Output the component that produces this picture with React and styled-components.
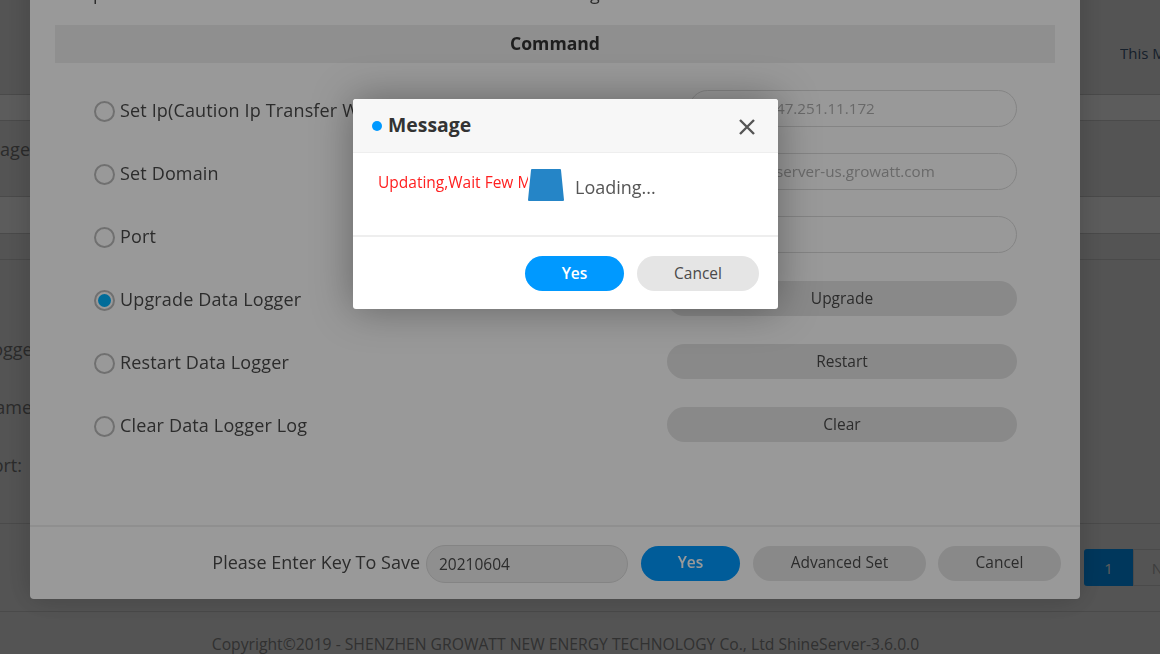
import React from 'react'
import styled, { createGlobalStyle } from 'styled-components'

const GlobalStyle = createGlobalStyle`
  html, body {
    margin: 0;
    height: 654px;
    overflow: hidden;
    background: #fff;
    font-family: "Open Sans", "Noto Sans", "Liberation Sans", sans-serif;
  }
`

/* page behind the dialogs */
const Page = styled.div`
  height: 654px;
  display: flex;
  flex-direction: column;
  background: #e8e8e8;
  color: #777;
  overflow: hidden;
  font-size: 18px;
`

const TopBar = styled.div`
  height: 95px;
  flex: none;
  display: flex;
  justify-content: flex-end;
  align-items: flex-start;
  padding: 43px 0 0;
  box-sizing: border-box;
  border-bottom: 1px solid #ccc;
`

const TopLabel = styled.span`
  width: 40px;
  font-size: 15px;
  line-height: 20px;
  white-space: nowrap;
  overflow: hidden;
  color: #3f5a78;
`

const TableRow = styled.div`
  height: ${(p) => p.$h}px;
  flex: none;
  box-sizing: border-box;
  padding-top: ${(p) => p.$pt || 0}px;
  border-bottom: 1px solid #ccc;
  background: ${(p) => (p.$light ? '#fff' : 'transparent')};
`

const FormArea = styled.div`
  height: 264px;
  flex: none;
  box-sizing: border-box;
  border-bottom: 1px solid #ccc;
  display: flex;
  flex-direction: column;
  padding-top: 78px;
  gap: 36px;
`

const SideText = styled.span`
  display: flex;
  justify-content: flex-end;
  width: ${(p) => p.$w}px;
  line-height: 22px;
  white-space: nowrap;
  overflow: hidden;
`

const BottomRow = styled.div`
  height: 88px;
  flex: none;
  box-sizing: border-box;
  border-bottom: 1px solid #ccc;
  display: flex;
  padding: 25px 0 0 1084px;
`

const PageBtn = styled.div`
  width: 49px;
  height: 37px;
  flex: none;
  box-sizing: border-box;
  display: flex;
  align-items: center;
  justify-content: center;
  font-size: 15px;
  border: ${(p) => (p.$active ? '0' : '1px solid #ccc')};
  border-radius: ${(p) => (p.$active ? '3px 0 0 3px' : '0')};
  background: ${(p) => (p.$active ? '#0099ff' : '#e8e8e8')};
  color: ${(p) => (p.$active ? '#fff' : '#aaa')};
`

const PageFooter = styled.div`
  flex: 1;
  text-align: center;
  font-size: 15.7px;
  color: #888;
  padding: 22px 29px 0 0;
  line-height: 20px;
  white-space: nowrap;
`

/* overlays */
const Mask = styled.div`
  position: fixed;
  inset: 0;
  background: rgba(0, 0, 0, 0.4);
`

const BigDialog = styled.div`
  position: fixed;
  left: 30px;
  top: -40px;
  width: 1050px;
  height: 639px;
  box-sizing: border-box;
  background: #fff;
  border-radius: 4px;
  box-shadow: 0 0 30px rgba(0, 0, 0, 0.2);
  display: flex;
  flex-direction: column;
  padding: 21px 25px 0;
  color: #4a4a4a;
`

const InfoRow = styled.div`
  height: 24px;
  flex: none;
  display: flex;
  gap: 400px;
  margin-bottom: 20px;
  padding-left: 25px;
  font-size: 18px;
  line-height: 24px;
`

const CommandTitle = styled.div`
  height: 38px;
  flex: none;
  background: #eee;
  display: flex;
  align-items: center;
  justify-content: center;
  padding-bottom: 2px;
  box-sizing: border-box;
  font-size: 17.6px;
  font-weight: 700;
  color: #333;
`

const CommandList = styled.div`
  flex: 1;
  display: flex;
  flex-direction: column;
  gap: 26px;
  padding: 27px 38px 0 39px;
`

const CommandRow = styled.div`
  height: 37px;
  display: flex;
  align-items: center;
  justify-content: space-between;
`

const RadioLabel = styled.label`
  display: flex;
  align-items: center;
  gap: 5px;
  margin-top: 3px;
  font-size: 18px;
  letter-spacing: 0.15px;
  white-space: nowrap;
`

const Radio = styled.span`
  width: 21px;
  height: 21px;
  flex: none;
  box-sizing: border-box;
  margin-top: 3px;
  border: 2px solid #bbb;
  border-radius: 50%;
  display: flex;
  align-items: center;
  justify-content: center;
  background: #fff;

  &::after {
    content: '';
    display: ${(p) => (p.$checked ? 'block' : 'none')};
    width: 13px;
    height: 13px;
    border-radius: 50%;
    background: #00b4ff;
  }
`

const PillInput = styled.div`
  width: 328px;
  height: 37px;
  box-sizing: border-box;
  border: 1px solid #ddd;
  border-radius: 19px;
  padding: 0 0 2px 86px;
  display: flex;
  align-items: center;
  font-size: 15.2px;
  color: #b0b0b0;
  white-space: nowrap;
`

const CommandBtn = styled.button`
  width: 350px;
  height: 35px;
  border: 0;
  border-radius: 18px;
  margin-top: 2px;
  padding: 0 0 2px;
  background: #e5e5e5;
  color: #4a4a4a;
  font: inherit;
  font-size: 15.5px;
`

const DialogFooter = styled.div`
  margin: 0 -25px;
  height: 74px;
  flex: none;
  box-sizing: border-box;
  border-top: 2px solid #eee;
  display: flex;
  align-items: center;
  justify-content: flex-end;
  padding: 0 19px 0 0;
`

const KeyLabel = styled.span`
  font-size: 18px;
  margin: 0 6px 2px 0;
  white-space: nowrap;
`

const KeyInput = styled.div`
  width: 202px;
  height: 38px;
  box-sizing: border-box;
  border: 1px solid #ddd;
  border-radius: 19px;
  background: #eee;
  padding-left: 12px;
  margin-top: 2px;
  display: flex;
  align-items: center;
  font-size: 15.5px;
  margin-right: 13px;
`

const PillBtn = styled.button`
  width: ${(p) => p.$w}px;
  height: 35px;
  border: 0;
  border-radius: 18px;
  margin-left: ${(p) => p.$ml || 0}px;
  padding: 0 0 2px;
  background: ${(p) => (p.$primary ? '#0099ff' : '#e5e5e5')};
  color: ${(p) => (p.$primary ? '#fff' : '#4a4a4a')};
  font: inherit;
  font-size: 15.5px;
  font-weight: ${(p) => (p.$bold ? 600 : 400)};
`

/* message box on top */
const MessageBox = styled.div`
  position: fixed;
  left: 353px;
  top: 99px;
  width: 425px;
  height: 210px;
  background: #fff;
  border-radius: 3px;
  box-shadow: 0 0 40px rgba(0, 0, 0, 0.35);
  display: flex;
  flex-direction: column;
  overflow: hidden;
`

const MessageHeader = styled.div`
  height: 54px;
  flex: none;
  box-sizing: border-box;
  background: #f7f7f7;
  border-bottom: 1px solid #eee;
  display: flex;
  align-items: center;
  padding: 0 22px 0 19px;
`

const Dot = styled.span`
  width: 10px;
  height: 10px;
  border-radius: 50%;
  background: #0099ff;
  margin-right: 6px;
`

const MessageTitle = styled.span`
  flex: 1;
  font-size: 19.4px;
  font-weight: 700;
  color: #333;
  margin-bottom: 2px;
`

const CloseIcon = styled.svg`
  width: 18px;
  height: 18px;
  margin-top: 2px;
`

const MessageBody = styled.div`
  position: relative;
  height: 84px;
  flex: none;
  box-sizing: border-box;
  padding: 19px 0 0 25px;
  color: #ff2020;
  font-size: 15.5px;
  line-height: 20px;
  white-space: nowrap;
  overflow: hidden;
  border-bottom: 2px solid #eee;
`

const LoaderLayer = styled.div`
  position: absolute;
  left: 175px;
  top: 0;
  right: 0;
  bottom: 0;
  background: #fff;
  display: flex;
  align-items: flex-start;
  padding-top: 15px;
  gap: 11px;
  color: #555;
  font-size: 18px;
`

const LoaderShape = styled.svg`
  width: 36px;
  height: 34px;
  flex: none;
`

const LoadingText = styled.span`
  line-height: 38px;
`

const MessageFooter = styled.div`
  flex: 1;
  display: flex;
  justify-content: flex-end;
  gap: 13px;
  padding: 19px 19px 0 0;
`

const commands = [
  { label: 'Set Ip(Caution Ip Transfer Will Lost Data)', value: '47.251.11.172' },
  { label: 'Set Domain', value: 'server-us.growatt.com' },
  { label: 'Port', value: '' },
  { label: 'Upgrade Data Logger', action: 'Upgrade', checked: true },
  { label: 'Restart Data Logger', action: 'Restart' },
  { label: 'Clear Data Logger Log', action: 'Clear' },
]

export default function App() {
  return (
    <>
      <GlobalStyle />
      <Page>
        <TopBar>
          <TopLabel>This Month</TopLabel>
        </TopBar>
        <TableRow $h={26} $light />
        <TableRow $h={76} $pt={17}>
          <SideText $w={30}>Page</SideText>
        </TableRow>
        <TableRow $h={37} $light />
        <TableRow $h={26} />
        <FormArea>
          <SideText $w={40}>Data Logger</SideText>
          <SideText $w={32}>Name</SideText>
          <SideText $w={22}>Port:</SideText>
        </FormArea>
        <BottomRow>
          <PageBtn $active>1</PageBtn>
          <PageBtn>N</PageBtn>
        </BottomRow>
        <PageFooter>Copyright©2019 - SHENZHEN GROWATT NEW ENERGY TECHNOLOGY Co., Ltd ShineServer-3.6.0.0</PageFooter>
      </Page>

      <Mask />
      <BigDialog>
        <InfoRow>
          <span>Update</span>
          <span>Setting</span>
        </InfoRow>
        <CommandTitle>Command</CommandTitle>
        <CommandList>
          {commands.map((c) => (
            <CommandRow key={c.label}>
              <RadioLabel>
                <Radio $checked={c.checked} />
                {c.label}
              </RadioLabel>
              {c.action ? <CommandBtn>{c.action}</CommandBtn> : <PillInput>{c.value}</PillInput>}
            </CommandRow>
          ))}
        </CommandList>
        <DialogFooter>
          <KeyLabel>Please Enter Key To Save</KeyLabel>
          <KeyInput>20210604</KeyInput>
          <PillBtn $w={99} $primary $bold>Yes</PillBtn>
          <PillBtn $w={173} $ml={13}>Advanced Set</PillBtn>
          <PillBtn $w={123} $ml={12}>Cancel</PillBtn>
        </DialogFooter>
      </BigDialog>

      <Mask />
      <MessageBox>
        <MessageHeader>
          <Dot />
          <MessageTitle>Message</MessageTitle>
          <CloseIcon viewBox="0 0 18 18" fill="none" stroke="#555" strokeWidth="2.4">
            <path d="M2 2l14 14M16 2L2 16" />
          </CloseIcon>
        </MessageHeader>
        <MessageBody>
          Updating,Wait Few Minutes
          <LoaderLayer>
            <LoaderShape viewBox="0 0 36 34">
              <path d="M4 1h28a1 1 0 0 1 1 1l3 30a1 1 0 0 1-1 1H1a1 1 0 0 1-1-1L3 2a1 1 0 0 1 1-1z" fill="#2585c7" />
            </LoaderShape>
            <LoadingText>Loading...</LoadingText>
          </LoaderLayer>
        </MessageBody>
        <MessageFooter>
          <PillBtn $w={99} $primary $bold>Yes</PillBtn>
          <PillBtn $w={122}>Cancel</PillBtn>
        </MessageFooter>
      </MessageBox>
    </>
  )
}
